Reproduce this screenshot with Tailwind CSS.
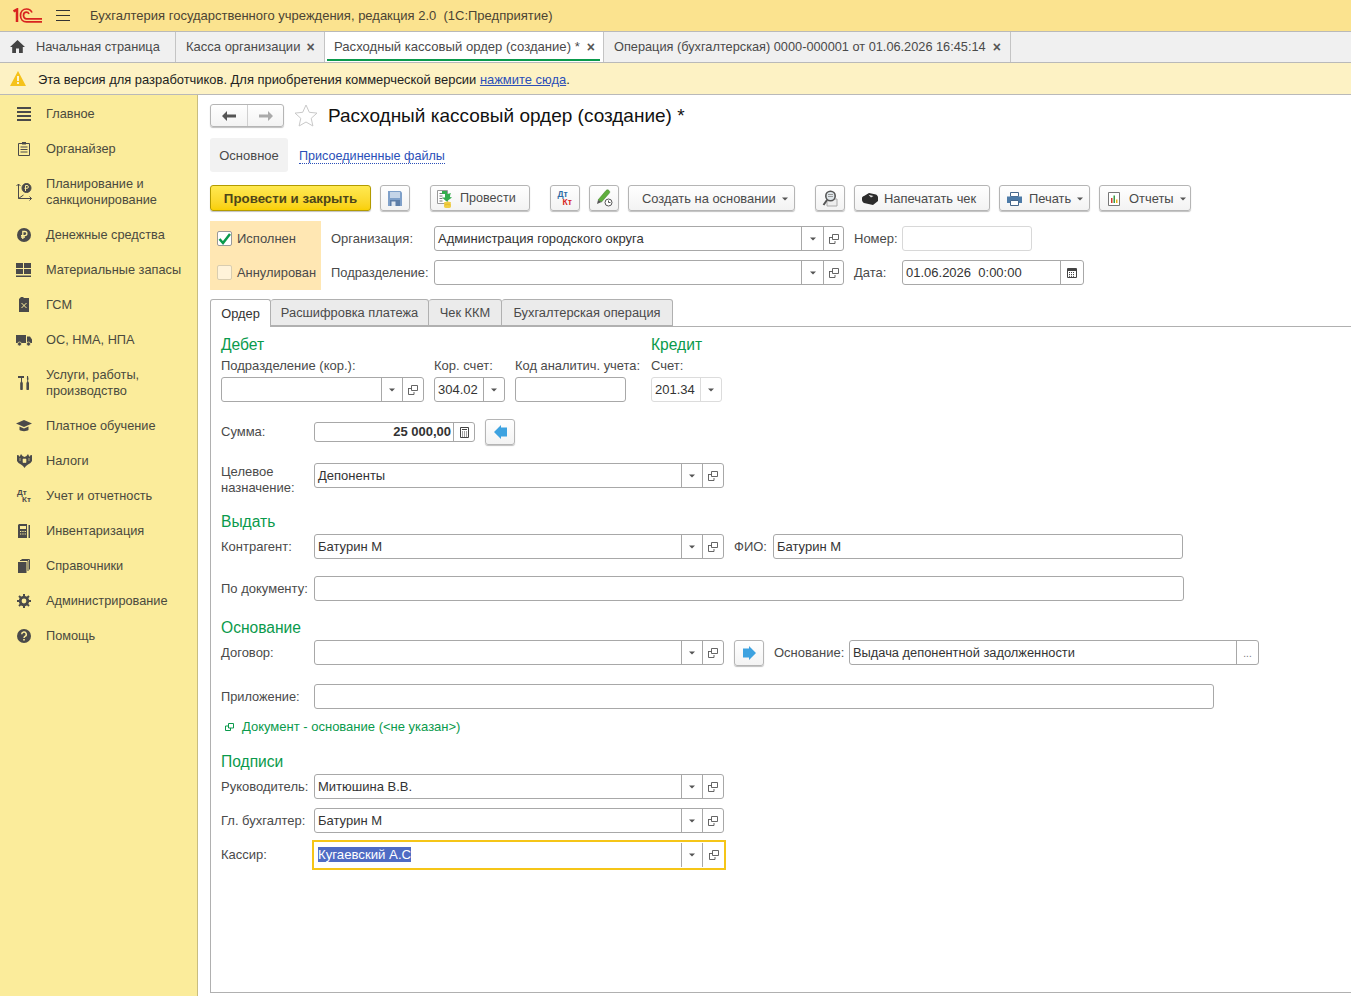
<!DOCTYPE html>
<html lang="ru">
<head>
  <meta charset="utf-8">
  <title>Расходный кассовый ордер</title>
  <script src="https://cdn.jsdelivr.net/npm/@tailwindcss/browser@4"></script>
</head>
<body class="h-[996px] w-[1351px] overflow-hidden bg-white font-['Liberation_Sans',Arial,sans-serif] text-[13px] text-[#4a4a4a]">
  <!-- shared icons -->
  <svg class="hidden">
    <symbol id="open" viewBox="0 0 10 10"><path d="M3.500 .5h6v5h-6zM3.500 3.500H.5M.5 3v6.500M.5 9.500h5.500V7" fill="none" stroke="#555" stroke-width=".9"/></symbol>
    <symbol id="arrow" viewBox="0 0 6 4"><path d="M0 .5h6L3 3.500z" fill="#555"/></symbol>
  </svg>

  <!-- Title bar -->
  <div class="flex h-[31px] items-center bg-[#fbe38f]">
    <svg class="ml-[13px] h-[15px] w-[29px]" viewBox="0 0 29 15" fill="none" stroke="#d8231f">
      <path d="M.5 3.500 4 1.500V14" stroke-width="2.500"/>
      <path d="M19 4.500C18 2.300 15.800 1 13.500 1 10 1 7.500 3.800 7.500 7.500S10 13.900 13.500 13.900H29" stroke-width="1.700"/>
      <path d="M16 6C15.500 4.900 14.500 4.200 13.500 4.200 11.800 4.200 10.500 5.600 10.500 7.500s1.300 3.300 3 3.300H29" stroke-width="1.700"/>
    </svg>
    <svg class="ml-[14px] h-[11px] w-[14px]" viewBox="0 0 14 11" stroke="#333" stroke-width="1"><path d="M0 .5h14M0 5.500h14M0 10.500h14"/></svg>
    <span class="ml-[20px] text-[#4b4433]">Бухгалтерия государственного учреждения, редакция 2.0&nbsp; (1С:Предприятие)</span>
  </div>

  <!-- Open windows -->
  <div class="flex h-[32px] border-y border-y-[#b9b9b9] bg-[#f0f0f0]">
    <div class="flex w-[176px] items-center border-r border-[#c4c4c4] pl-[10px] text-[12.800px]">
      <svg class="-mt-[2px] h-[13px] w-[15px]" viewBox="0 0 15 13" fill="#444"><path d="M7.500 0 0 7h2.200v6h3.800V8.500h3V13h3.800V7H15z"/></svg>
      <span class="ml-[11px]">Начальная страница</span>
    </div>
    <div class="flex w-[149px] items-center border-r border-[#c4c4c4] pl-[10px]">
      <span>Касса организации</span><span class="ml-[6px] text-[14px] font-bold leading-none text-[#555]">×</span>
    </div>
    <div class="relative flex w-[279px] items-center border-r border-[#c4c4c4] bg-white pl-[9px]">
      <span class="text-[13.100px]">Расходный кассовый ордер (создание) *</span><span class="ml-[7px] text-[14px] font-bold leading-none text-[#555]">×</span>
      <div class="absolute bottom-[1px] left-[2px] right-[3px] h-[2px] bg-[#0a9a4c]"></div>
    </div>
    <div class="flex w-[407px] items-center border-r border-[#c4c4c4] pl-[10px]">
      <span class="text-[12.750px]">Операция (бухгалтерская) 0000-000001 от 01.06.2026 16:45:14</span><span class="ml-[7px] text-[14px] font-bold leading-none text-[#555]">×</span>
    </div>
  </div>

  <!-- Developer notice -->
  <div class="flex h-[32px] items-center border-b border-[#b9b9b9] bg-[#fdf2c4] pl-[10px]">
    <svg class="h-[15px] w-[16px]" viewBox="0 0 16 15"><path d="M8 0 16 15H0z" fill="#f5c21a"/><path d="M7.200 5h1.600v5H7.200zM7.200 11h1.600v2H7.200z" fill="#fff"/></svg>
    <span class="ml-[12px] pt-[2px] text-[12.930px] text-[#222]">Эта версия для разработчиков. Для приобретения коммерческой версии <a class="text-[#2b4fb8] underline" href="#">нажмите сюда</a>.</span>
  </div>

  <div class="flex h-[901px]">
    <!-- Sections panel -->
    <nav class="w-[198px] shrink-0 border-r border-[#c9bd7f] bg-[#fbec9b] pt-px text-[12.750px] leading-[16px] text-[#4a4a3e]">
      <div class="flex h-[35px] items-center">
        <svg class="ml-[17px] h-[14px] w-[14px]" viewBox="0 0 14 14" fill="#4a4a4a"><path d="M0 0h14v2H0zM0 4h14v2H0zM0 8h14v2H0zM0 12h14v2H0z"/></svg>
        <span class="ml-[15px]">Главное</span>
      </div>
      <div class="flex h-[35px] items-center">
        <svg class="ml-[18px] h-[14px] w-[12px]" viewBox="0 0 12 14" fill="none" stroke="#4a4a4a"><path d="M.5 1.500h11v12H.5z"/><path d="M4 0h4v2.500H4z" fill="#4a4a4a" stroke="none"/><path d="M2.500 5h7M2.500 7.500h7M2.500 10h7"/></svg>
        <span class="ml-[16px]">Органайзер</span>
      </div>
      <div class="flex h-[51px] items-center">
        <svg class="ml-[16px] h-[18px] w-[16px]" viewBox="0 0 16 18" fill="none" stroke="#4a4a4a"><path d="M2.500 1v14.500H15.500M2.500 15.500l5-3.500"/><path d="M.5 3l2-2 2 2M13.500 13.500l2 2-2 2" /><circle cx="10.500" cy="5" r="4.500" fill="#4a4a4a"/><path d="M9.500 8V2.500h1.500a1.300 1.300 0 0 1 0 2.800H8.500" stroke="#fbec9b"/></svg>
        <span class="ml-[14px]">Планирование и<br>санкционирование</span>
      </div>
      <div class="flex h-[35px] items-center">
        <svg class="ml-[17px] h-[14px] w-[14px]" viewBox="0 0 14 14"><circle cx="7" cy="7" r="7" fill="#4a4a4a"/><path d="M5.800 11V3.500h2a2 2 0 0 1 0 4.200H4M4 9.200h4" fill="none" stroke="#fbec9b" stroke-width="1.300"/></svg>
        <span class="ml-[15px]">Денежные средства</span>
      </div>
      <div class="flex h-[35px] items-center">
        <svg class="ml-[16px] h-[14px] w-[15px]" viewBox="0 0 15 14" fill="#4a4a4a"><path d="M0 0h7v5H0zM8 0h7v5H8zM0 6h7v5H0zM8 6h7v5H8zM0 12.500h15V14H0z"/></svg>
        <span class="ml-[15px]">Материальные запасы</span>
      </div>
      <div class="flex h-[35px] items-center">
        <svg class="ml-[19px] h-[15px] w-[10px]" viewBox="0 0 10 15"><path d="M0 2 2 0h2l1 1h5v14H0z" fill="#4a4a4a"/><path d="M2.500 6l5 5M7.500 6l-5 5" stroke="#fbec9b"/></svg>
        <span class="ml-[17px]">ГСМ</span>
      </div>
      <div class="flex h-[35px] items-center">
        <svg class="ml-[16px] h-[12px] w-[16px]" viewBox="0 0 16 12" fill="#4a4a4a"><path d="M0 1h10v8H0zM11 2.500h3l2 3V9h-5z"/><circle cx="3.500" cy="10" r="2" stroke="#fbec9b" stroke-width=".7"/><circle cx="12.500" cy="10" r="2" stroke="#fbec9b" stroke-width=".7"/></svg>
        <span class="ml-[14px]">ОС, НМА, НПА</span>
      </div>
      <div class="flex h-[51px] items-center">
        <svg class="ml-[18px] h-[14px] w-[13px]" viewBox="0 0 13 14" fill="#4a4a4a"><path d="M0 0h6v2H4v3.500L4.800 7v6a1.300 1.300 0 0 1-2.600 0V7L3 5.500V2H0zM9 0h1l.5 3-.5 2 1 2v6a1.300 1.300 0 0 1-2.600 0V7l1-2-.5-2z"/></svg>
        <span class="ml-[15px] pt-px">Услуги, работы,<br>производство</span>
      </div>
      <div class="flex h-[35px] items-center">
        <svg class="ml-[16px] h-[12px] w-[16px]" viewBox="0 0 16 12" fill="#4a4a4a"><path d="M8 0 16 3.500 8 7 0 3.500zM3.500 6.500 8 8.500l4.500-2V10C11 11.500 5 11.500 3.500 10z"/></svg>
        <span class="ml-[14px]">Платное обучение</span>
      </div>
      <div class="flex h-[35px] items-center">
        <svg class="ml-[17px] h-[15px] w-[15px]" viewBox="0 0 15 15" fill="#4a4a4a"><path d="M0 2l2 .5.500 1.500L4 1l1.500 2L7.500 4 9.500 3 11 1l1.500 3 .5-1.500L15 2v6l-1.500 2L11 11.500 9 13l-1.500 2L6 13l-2-1.500L1.500 10 0 8z"/><path d="M6 6h3v3.500H6zM3 5v3M12 5v3" stroke="#fbec9b" fill="#fbec9b" stroke-width=".6"/></svg>
        <span class="ml-[14px]">Налоги</span>
      </div>
      <div class="flex h-[35px] items-center">
        <div class="ml-[17px] w-[16px] text-[8px] font-bold leading-[7px] text-[#4a4a4a]">Дт<div class="pl-[5px]">Кт</div></div>
        <span class="ml-[13px]">Учет и отчетность</span>
      </div>
      <div class="flex h-[35px] items-center">
        <svg class="ml-[18px] h-[14px] w-[12px]" viewBox="0 0 12 14" fill="#4a4a4a"><path d="M1 0h8v14H0V1zM10.500 1H12v13h-1.500z"/><path d="M2 2h6v3H2zM2 7h1.300v1H2zM4.300 7h1.300v1H4.300zM6.600 7h1.300v1H6.600zM2 9.500h1.300v1H2zM4.300 9.500h1.300v1H4.300zM6.600 9.500h1.300v1H6.600z" fill="#fbec9b"/></svg>
        <span class="ml-[16px]">Инвентаризация</span>
      </div>
      <div class="flex h-[35px] items-center">
        <svg class="ml-[18px] h-[14px] w-[12px]" viewBox="0 0 12 14"><path d="M0 3h8.500v11H0z" fill="#4a4a4a"/><path d="M2 1.500h8V12M3.500 .5H11.500V10.500" fill="none" stroke="#4a4a4a"/></svg>
        <span class="ml-[16px]">Справочники</span>
      </div>
      <div class="flex h-[35px] items-center">
        <svg class="ml-[17px] h-[14px] w-[14px]" viewBox="0 0 14 14" fill="none"><circle cx="7" cy="7" r="3.800" stroke="#4a4a4a" stroke-width="2.800"/><path d="M7 0v14M0 7h14M2 2l10 10M12 2 2 12" stroke="#4a4a4a" stroke-width="2" stroke-dasharray="2.500 9 2.500 0"/></svg>
        <span class="ml-[15px]">Администрирование</span>
      </div>
      <div class="flex h-[35px] items-center">
        <svg class="ml-[17px] h-[14px] w-[14px]" viewBox="0 0 14 14"><circle cx="7" cy="7" r="7" fill="#4a4a4a"/><path d="M4.700 5.300a2.300 2.300 0 1 1 3.300 2.100C7.300 7.800 7 8.200 7 9" fill="none" stroke="#fbec9b" stroke-width="1.500"/><path d="M6.200 10h1.600v1.600H6.200z" fill="#fbec9b"/></svg>
        <span class="ml-[15px]">Помощь</span>
      </div>
    </nav>

    <!-- Document form -->
    <main class="min-w-0 flex-1 pl-[12px]">
      <div class="mt-[9px] flex h-[23px] items-center">
        <div class="flex h-[23px] w-[74px] rounded-[3px] border border-[#b5b5b5] bg-linear-to-b from-white to-[#f3f3f3] shadow-[0_1px_1px_rgba(0,0,0,.25)]">
          <div class="flex w-[37px] items-center justify-center border-r border-[#d0d0d0]"><svg class="h-[10px] w-[14px]" viewBox="0 0 14 10" fill="#555"><path d="M5 0v3.500h9v3H5V10L0 5z"/></svg></div>
          <div class="flex flex-1 items-center justify-center"><svg class="h-[10px] w-[14px]" viewBox="0 0 14 10" fill="#aaa"><path d="M9 0v3.500H0v3h9V10l5-5z"/></svg></div>
        </div>
        <svg class="ml-[10px] h-[23px] w-[24px]" viewBox="0 0 24 23" fill="none" stroke="#c9c9c9"><path d="M12 1l3.300 7.300 7.700.8-5.800 5.200 1.700 7.700-6.900-4-6.900 4 1.700-7.700L1 9.100l7.700-.8z"/></svg>
        <h1 class="ml-[10px] text-[19px] leading-none text-[#111]">Расходный кассовый ордер (создание) *</h1>
      </div>

      <div class="mt-[11px] flex h-[34px] items-center">
        <div class="flex h-[34px] w-[78px] items-center justify-center rounded-[3px] bg-[#f2f2f2] pt-px">Основное</div>
        <a class="ml-[11px] mt-[2px] border-b border-dotted border-[#2b4fb8] text-[12.600px] leading-[14px] text-[#2b4fb8]" href="#">Присоединенные файлы</a>
      </div>

      <!-- Command bar -->
      <div class="mt-[13px] flex h-[26px] text-[#4a4a4a]">
        <button class="w-[161px] rounded-[3px] border border-[#b39b00] bg-linear-to-b from-[#ffe94f] to-[#f9d000] pt-px text-[13.300px] font-bold text-[#4d4519] shadow-[0_1px_1px_rgba(0,0,0,.25)]">Провести и закрыть</button>
        <button class="ml-[9px] flex w-[30px] items-center justify-center rounded-[3px] border border-[#b5b5b5] bg-linear-to-b from-white to-[#f3f3f3] shadow-[0_1px_1px_rgba(0,0,0,.25)]">
          <svg class="h-[15px] w-[14px]" viewBox="0 0 14 15"><path d="M0 0h12.500L14 1.500V15H0z" fill="#7fa0c9"/><path d="M2 1h10v6H2z" fill="#c5d5e8"/><path d="M2 9h10v6H2z" fill="#5d7ea8"/><path d="M3.500 10.500h4V15h-4z" fill="#dfe7f0"/></svg>
        </button>
        <button class="ml-[20px] flex w-[100px] items-center rounded-[3px] border border-[#b5b5b5] bg-linear-to-b from-white to-[#f3f3f3] pl-[6px] pt-px shadow-[0_1px_1px_rgba(0,0,0,.25)]">
          <svg class="h-[18px] w-[16px]" viewBox="0 0 16 18"><path d="M.5.5h10v13H.5z" fill="#fff" stroke="#999"/><path d="M2.500 3.500h3M2.500 6h3M2.500 8.500h3M2.500 11h3" stroke="#777"/><path d="M5 1h5v3c2 0 3-1 4-1-.5 1-1 2-1 4l2 .5-5.500 4L5 7.500h3V4H5z" fill="#35ad4d"/><ellipse cx="10.500" cy="13" rx="3.500" ry="1.500" fill="#f0cf45"/><ellipse cx="10.500" cy="15" rx="3.500" ry="1.500" fill="#e8bf2e"/><ellipse cx="10.500" cy="16.500" rx="3.500" ry="1.500" fill="#f0cf45"/></svg>
          <span class="ml-[7px] text-[12.600px]">Провести</span>
        </button>
        <button class="ml-[20px] flex w-[30px] items-center justify-center rounded-[3px] border border-[#b5b5b5] bg-linear-to-b from-white to-[#f3f3f3] shadow-[0_1px_1px_rgba(0,0,0,.25)]">
          <div class="w-[15px] text-left text-[8.500px] font-bold leading-[8px] text-[#2e6ca5]">Дт<div class="pl-[5px] text-[#d7261e]">Кт</div></div>
        </button>
        <button class="ml-[9px] flex w-[30px] items-center justify-center rounded-[3px] border border-[#b5b5b5] bg-linear-to-b from-white to-[#f3f3f3] shadow-[0_1px_1px_rgba(0,0,0,.25)]">
          <svg class="h-[18px] w-[17px]" viewBox="0 0 17 18"><path d="M2 11 10 1.500c1-1 2-1 3 0s1 2 0 3L5.500 13z" fill="#5fae3d" stroke="#3e7d28" stroke-width=".5"/><path d="M2 11l3.500 2L1 15z" fill="#555"/><circle cx="12.500" cy="13.500" r="3.500" fill="#fff" stroke="#555"/><path d="M12.500 11.500v2h2" fill="none" stroke="#555"/></svg>
        </button>
        <button class="ml-[9px] flex w-[167px] items-center rounded-[3px] border border-[#b5b5b5] bg-linear-to-b from-white to-[#f3f3f3] pl-[13px] pt-px text-[12.900px] shadow-[0_1px_1px_rgba(0,0,0,.25)]">
          Создать на основании<svg class="ml-[6px] h-[4px] w-[6px]"><use href="#arrow"/></svg>
        </button>
        <button class="ml-[20px] flex w-[30px] items-center justify-center rounded-[3px] border border-[#b5b5b5] bg-linear-to-b from-white to-[#f3f3f3] shadow-[0_1px_1px_rgba(0,0,0,.25)]">
          <svg class="h-[17px] w-[16px]" viewBox="0 0 16 17" fill="none" stroke="#555"><path d="M5 9h10v7H5z" fill="#eee" stroke="#aaa"/><circle cx="8.500" cy="6" r="4.700" fill="#dfe6ea" stroke-width="1.600"/><path d="M6 6.500h5M6 4.500h5" stroke="#999"/><path d="M5 10l-3.500 5" stroke-width="2"/></svg>
        </button>
        <button class="ml-[9px] flex w-[136px] items-center rounded-[3px] border border-[#b5b5b5] bg-linear-to-b from-white to-[#f3f3f3] pl-[7px] pt-px text-[12.900px] shadow-[0_1px_1px_rgba(0,0,0,.25)]">
          <svg class="h-[12px] w-[16px]" viewBox="0 0 16 12" fill="#2b2b2b"><path d="M0 5c0-1 1-2 2-2l5-3 7 1.500c1 .5 2 1.500 2 3V8l-5 4-9-2C1 9.500 0 8 0 7z"/><path d="M6.500 1.800 11.500 3 9 4.500z" fill="#ddd"/></svg>
          <span class="ml-[6px]">Напечатать чек</span>
        </button>
        <button class="ml-[9px] flex w-[91px] items-center rounded-[3px] border border-[#b5b5b5] bg-linear-to-b from-white to-[#f3f3f3] pl-[7px] pt-px text-[12.900px] shadow-[0_1px_1px_rgba(0,0,0,.25)]">
          <svg class="h-[14px] w-[15px]" viewBox="0 0 15 14"><path d="M3.500.5h8v4h-8z" fill="#fff" stroke="#46678c"/><path d="M0 4.500h15V11H0z" fill="#4d7ba8"/><path d="M3.500 8.500h8v5h-8z" fill="#fff" stroke="#46678c"/></svg>
          <span class="ml-[7px]">Печать</span><svg class="ml-[6px] h-[4px] w-[6px]"><use href="#arrow"/></svg>
        </button>
        <button class="ml-[9px] flex w-[92px] items-center rounded-[3px] border border-[#b5b5b5] bg-linear-to-b from-white to-[#f3f3f3] pl-[8px] pt-px text-[12.900px] shadow-[0_1px_1px_rgba(0,0,0,.25)]">
          <svg class="h-[14px] w-[12px]" viewBox="0 0 12 14"><path d="M.5.5h11v13H.5z" fill="#fff" stroke="#777"/><path d="M3 6h1.500v5H3z" fill="#d23b2c"/><path d="M5.500 3.500H7V11H5.500z" fill="#3a9a46"/><path d="M8 7.500h1.500V11H8z" fill="#e7b21c"/></svg>
          <span class="ml-[9px]">Отчеты</span><svg class="ml-[6px] h-[4px] w-[6px]"><use href="#arrow"/></svg>
        </button>
      </div>

      <!-- Document header fields -->
      <div class="mt-[10px] flex h-[69px]">
        <div class="w-[111px] bg-[#ffe7b3]">
          <div class="mt-[10px] flex h-[15px] items-center pl-[7px]">
            <div class="flex h-[15px] w-[15px] items-center justify-center rounded-[2px] border border-[#999] bg-white">
              <svg class="h-[12px] w-[13px]" viewBox="0 0 13 12" fill="none" stroke="#0a9a4c" stroke-width="2.500"><path d="M1.500 6 5 10 12 1"/></svg>
            </div>
            <span class="ml-[5px]">Исполнен</span>
          </div>
          <div class="mt-[19px] flex h-[15px] items-center pl-[7px]">
            <div class="h-[15px] w-[15px] rounded-[2px] border border-[#d9cdb0] bg-[#fff3d9]"></div>
            <span class="ml-[5px] whitespace-nowrap text-[12.900px]">Аннулирован</span>
          </div>
        </div>
        <div class="ml-[10px]">
          <div class="mt-[5px] flex h-[25px] items-center">
            <span class="w-[103px]">Организация:</span>
            <div class="flex h-[25px] w-[410px] items-center rounded-[3px] border border-[#a8a8a8] pl-[3px] text-[#333]">
              <span class="flex-1">Администрация городского округа</span>
              <div class="flex h-full w-[22px] items-center justify-center border-l border-[#a8a8a8]"><svg class="h-[4px] w-[6px]"><use href="#arrow"/></svg></div>
              <div class="flex h-full w-[20px] items-center justify-center border-l border-[#a8a8a8]"><svg class="h-[10px] w-[10px]"><use href="#open"/></svg></div>
            </div>
            <span class="ml-[10px] w-[48px]">Номер:</span>
            <div class="h-[25px] w-[130px] rounded-[3px] border border-[#d8d8d8]"></div>
          </div>
          <div class="mt-[9px] flex h-[25px] items-center">
            <span class="w-[103px] text-[12.900px]">Подразделение:</span>
            <div class="flex h-[25px] w-[410px] items-center rounded-[3px] border border-[#a8a8a8] pl-[3px] text-[#333]">
              <span class="flex-1"></span>
              <div class="flex h-full w-[22px] items-center justify-center border-l border-[#a8a8a8]"><svg class="h-[4px] w-[6px]"><use href="#arrow"/></svg></div>
              <div class="flex h-full w-[20px] items-center justify-center border-l border-[#a8a8a8]"><svg class="h-[10px] w-[10px]"><use href="#open"/></svg></div>
            </div>
            <span class="ml-[10px] w-[48px]">Дата:</span>
            <div class="flex h-[25px] w-[182px] items-center rounded-[3px] border border-[#a8a8a8] pl-[3px] text-[#333]">
              <span class="flex-1">01.06.2026&nbsp; 0:00:00</span>
              <div class="flex h-full w-[23px] items-center justify-center border-l border-[#a8a8a8]">
                <svg class="h-[11px] w-[10px]" viewBox="0 0 10 11" fill="none" stroke="#444"><path d="M.5 1.500h9v9h-9z"/><path d="M0 3h10" stroke-width="2"/><path d="M2 5.500h6M2 7.500h6M2 9.300h6" stroke-dasharray="1 1"/></svg>
              </div>
            </div>
          </div>
        </div>
      </div>

      <!-- Tabs -->
      <div class="mt-[9px] flex h-[28px] text-[12.850px]">
        <div class="z-10 flex h-[28px] w-[61px] items-center justify-center rounded-t-[3px] border border-b-0 border-[#b0b0b0] bg-white text-[#333]">Ордер</div>
        <div class="flex h-[27px] w-[158px] items-center justify-center rounded-t-[3px] border border-l-0 border-[#b0b0b0] bg-[#ebebeb]">Расшифровка платежа</div>
        <div class="flex h-[27px] w-[73px] items-center justify-center rounded-t-[3px] border border-l-0 border-[#b0b0b0] bg-[#ebebeb]">Чек ККМ</div>
        <div class="flex h-[27px] w-[171px] items-center justify-center rounded-t-[3px] border border-l-0 border-[#b0b0b0] bg-[#ebebeb]">Бухгалтерская операция</div>
      </div>

      <section class="-mt-px h-[667px] border-y border-l border-[#b0b0b0] pl-[10px] pt-[7px]">
        <!-- Дебет / Кредит -->
        <div class="flex">
          <div class="w-[405px]">
            <h2 class="h-[20px] text-[15.600px] leading-[22px] text-[#0a9a4c]">Дебет</h2>
            <div class="mt-[3px] flex gap-[10px] whitespace-nowrap">
              <div class="w-[203px]">
                <div class="h-[16px] leading-[18px]">Подразделение (кор.):</div>
                <div class="mt-[4px] flex h-[25px] items-center rounded-[3px] border border-[#a8a8a8]">
                  <span class="flex-1"></span>
                  <div class="flex h-full w-[21px] items-center justify-center border-l border-[#a8a8a8]"><svg class="h-[4px] w-[6px]"><use href="#arrow"/></svg></div>
                  <div class="flex h-full w-[21px] items-center justify-center border-l border-[#a8a8a8]"><svg class="h-[10px] w-[10px]"><use href="#open"/></svg></div>
                </div>
              </div>
              <div class="w-[71px]">
                <div class="h-[16px] leading-[18px]">Кор. счет:</div>
                <div class="mt-[4px] flex h-[25px] items-center rounded-[3px] border border-[#a8a8a8] pl-[3px] text-[#333]">
                  <span class="flex-1">304.02</span>
                  <div class="flex h-full w-[21px] items-center justify-center border-l border-[#a8a8a8]"><svg class="h-[4px] w-[6px]"><use href="#arrow"/></svg></div>
                </div>
              </div>
              <div class="w-[111px]">
                <div class="h-[16px] text-[12.900px] leading-[18px]">Код аналитич. учета:</div>
                <div class="mt-[4px] h-[25px] rounded-[3px] border border-[#a8a8a8]"></div>
              </div>
            </div>
          </div>
          <div class="ml-[25px] w-[71px]">
            <h2 class="h-[20px] text-[15.600px] leading-[22px] text-[#0a9a4c]">Кредит</h2>
            <div class="mt-[3px] h-[16px] leading-[18px]">Счет:</div>
            <div class="mt-[4px] flex h-[25px] items-center rounded-[3px] border border-[#dcdcdc] pl-[3px] text-[#333]">
              <span class="flex-1">201.34</span>
              <div class="flex h-full w-[21px] items-center justify-center border-l border-[#dcdcdc]"><svg class="h-[4px] w-[6px]"><use href="#arrow"/></svg></div>
            </div>
          </div>
        </div>

        <!-- Сумма -->
        <div class="mt-[17px] flex h-[26px] items-center">
          <span class="w-[93px]">Сумма:</span>
          <div class="flex h-[20px] w-[161px] items-center rounded-[3px] border border-[#a8a8a8] font-bold text-[#333]">
            <span class="flex-1 pr-[2px] text-right">25 000,00</span>
            <div class="flex h-full w-[21px] items-center justify-center border-l border-[#a8a8a8]">
              <svg class="h-[11px] w-[9px]" viewBox="0 0 9 11" fill="none" stroke="#444"><path d="M.5.5h8v10h-8z"/><path d="M2 2.500h5"/><path d="M2 5h5M2 7h5M2 9h5" stroke-dasharray="1 1"/></svg>
            </div>
          </div>
          <button class="ml-[10px] flex h-[26px] w-[30px] items-center justify-center rounded-[3px] border border-[#b5b5b5] bg-linear-to-b from-white to-[#f3f3f3] shadow-[0_1px_1px_rgba(0,0,0,.25)]">
            <svg class="h-[14px] w-[13px]" viewBox="0 0 13 14" fill="#3da2e0"><path d="M7 0v2.500h6v9H7V14L0 7z"/></svg>
          </button>
        </div>

        <!-- Целевое назначение -->
        <div class="mt-[18px] flex h-[25px]">
          <span class="w-[93px] pt-[1px] leading-[16px]">Целевое назначение:</span>
          <div class="flex h-[25px] w-[410px] items-center rounded-[3px] border border-[#a8a8a8] pl-[3px] text-[#333]">
            <span class="flex-1">Депоненты</span>
            <div class="flex h-full w-[21px] items-center justify-center border-l border-[#a8a8a8]"><svg class="h-[4px] w-[6px]"><use href="#arrow"/></svg></div>
            <div class="flex h-full w-[21px] items-center justify-center border-l border-[#a8a8a8]"><svg class="h-[10px] w-[10px]"><use href="#open"/></svg></div>
          </div>
        </div>

        <!-- Выдать -->
        <h2 class="mt-[23px] h-[20px] text-[15.600px] leading-[22px] text-[#0a9a4c]">Выдать</h2>
        <div class="mt-[3px] flex h-[25px] items-center">
          <span class="w-[93px]">Контрагент:</span>
          <div class="flex h-[25px] w-[410px] items-center rounded-[3px] border border-[#a8a8a8] pl-[3px] text-[#333]">
            <span class="flex-1">Батурин М</span>
            <div class="flex h-full w-[21px] items-center justify-center border-l border-[#a8a8a8]"><svg class="h-[4px] w-[6px]"><use href="#arrow"/></svg></div>
            <div class="flex h-full w-[21px] items-center justify-center border-l border-[#a8a8a8]"><svg class="h-[10px] w-[10px]"><use href="#open"/></svg></div>
          </div>
          <span class="ml-[10px] w-[39px]">ФИО:</span>
          <div class="flex h-[25px] w-[410px] items-center rounded-[3px] border border-[#a8a8a8] pl-[3px] text-[#333]">Батурин М</div>
        </div>
        <div class="mt-[17px] flex h-[25px] items-center">
          <span class="w-[93px] whitespace-nowrap">По документу:</span>
          <div class="h-[25px] w-[870px] rounded-[3px] border border-[#a8a8a8]"></div>
        </div>

        <!-- Основание -->
        <h2 class="mt-[16px] h-[20px] text-[15.600px] leading-[22px] text-[#0a9a4c]">Основание</h2>
        <div class="mt-[3px] flex h-[25px] items-center">
          <span class="w-[93px]">Договор:</span>
          <div class="flex h-[25px] w-[410px] items-center rounded-[3px] border border-[#a8a8a8]">
            <span class="flex-1"></span>
            <div class="flex h-full w-[21px] items-center justify-center border-l border-[#a8a8a8]"><svg class="h-[4px] w-[6px]"><use href="#arrow"/></svg></div>
            <div class="flex h-full w-[21px] items-center justify-center border-l border-[#a8a8a8]"><svg class="h-[10px] w-[10px]"><use href="#open"/></svg></div>
          </div>
          <button class="ml-[10px] flex h-[26px] w-[30px] items-center justify-center rounded-[3px] border border-[#b5b5b5] bg-linear-to-b from-white to-[#f3f3f3] shadow-[0_1px_1px_rgba(0,0,0,.25)]">
            <svg class="h-[14px] w-[13px]" viewBox="0 0 13 14" fill="#3da2e0"><path d="M6 0v2.500H0v9h6V14l7-7z"/></svg>
          </button>
          <span class="ml-[10px] w-[75px]">Основание:</span>
          <div class="flex h-[25px] w-[410px] items-center rounded-[3px] border border-[#a8a8a8] pl-[3px] text-[#333]">
            <span class="flex-1 text-[12.850px]">Выдача депонентной задолженности</span>
            <div class="flex h-full w-[22px] items-end justify-center border-l border-[#a8a8a8] pb-[5px] text-[10px] leading-none text-[#777]">...</div>
          </div>
        </div>
        <div class="mt-[19px] flex h-[25px] items-center">
          <span class="w-[93px] text-[12.800px]">Приложение:</span>
          <div class="h-[25px] w-[900px] rounded-[3px] border border-[#a8a8a8]"></div>
        </div>
        <div class="mt-[10px] flex h-[16px] items-center pl-[4px] text-[#0a9a4c]">
          <svg class="h-[8px] w-[9px]" viewBox="0 0 9 8" fill="none" stroke="#0a9a4c"><path d="M3.500.5h5v4.500h-5zM3.500 3H.5v4.500h5V5"/></svg>
          <span class="ml-[8px]">Документ - основание (&lt;не указан&gt;)</span>
        </div>

        <!-- Подписи -->
        <h2 class="mt-[16px] h-[20px] text-[15.600px] leading-[22px] text-[#0a9a4c]">Подписи</h2>
        <div class="mt-[3px] flex h-[25px] items-center">
          <span class="w-[93px]">Руководитель:</span>
          <div class="flex h-[25px] w-[410px] items-center rounded-[3px] border border-[#a8a8a8] pl-[3px] text-[#333]">
            <span class="flex-1">Митюшина В.В.</span>
            <div class="flex h-full w-[21px] items-center justify-center border-l border-[#a8a8a8]"><svg class="h-[4px] w-[6px]"><use href="#arrow"/></svg></div>
            <div class="flex h-full w-[21px] items-center justify-center border-l border-[#a8a8a8]"><svg class="h-[10px] w-[10px]"><use href="#open"/></svg></div>
          </div>
        </div>
        <div class="mt-[9px] flex h-[25px] items-center">
          <span class="w-[93px]">Гл. бухгалтер:</span>
          <div class="flex h-[25px] w-[410px] items-center rounded-[3px] border border-[#a8a8a8] pl-[3px] text-[#333]">
            <span class="flex-1">Батурин М</span>
            <div class="flex h-full w-[21px] items-center justify-center border-l border-[#a8a8a8]"><svg class="h-[4px] w-[6px]"><use href="#arrow"/></svg></div>
            <div class="flex h-full w-[21px] items-center justify-center border-l border-[#a8a8a8]"><svg class="h-[10px] w-[10px]"><use href="#open"/></svg></div>
          </div>
        </div>
        <div class="mt-[9px] flex h-[25px] items-center">
          <span class="w-[93px]">Кассир:</span>
          <div class="-ml-[2px] flex h-[30px] w-[414px] shrink-0 items-center border-2 border-[#f5c518] pl-[4px] text-[#333]">
            <span class="flex-1"><span class="bg-[#4f6bc4] text-[13.200px] text-white">Кугаевский А.С</span></span>
            <div class="flex h-[24px] w-[21px] items-center justify-center border-l border-[#a8a8a8]"><svg class="h-[4px] w-[6px]"><use href="#arrow"/></svg></div>
            <div class="flex h-[24px] w-[22px] items-center justify-center border-l border-[#a8a8a8]"><svg class="h-[10px] w-[10px]"><use href="#open"/></svg></div>
          </div>
        </div>
      </section>
    </main>
  </div>
</body>
</html>
